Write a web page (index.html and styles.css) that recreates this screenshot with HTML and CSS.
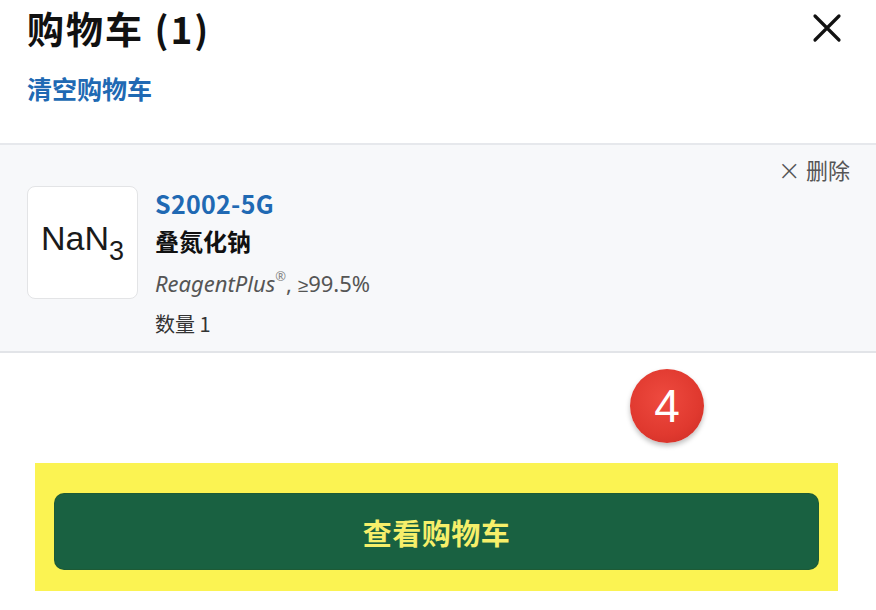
FILE: index.html
```html
<!DOCTYPE html>
<html lang="zh">
<head>
<meta charset="utf-8">
<link rel="stylesheet" href="styles.css">
</head>
<body>
<div class="panel">
  <header class="head">
    <div class="head-top">
      <h1 class="title">购物车 (1)</h1>
      <button class="close" aria-label="关闭">
        <svg width="30" height="30" viewBox="0 0 30 30"><path d="M3 3L27 27M27 3L3 27" stroke="#111" stroke-width="3.2" stroke-linecap="round"/></svg>
      </button>
    </div>
    <a class="clear" href="#">清空购物车</a>
  </header>
  <section class="item">
    <div class="item-del"><span class="del-x">×</span> 删除</div>
    <div class="item-body">
      <div class="thumb"><span>NaN<sub>3</sub></span></div>
      <div class="info">
        <a class="sku" href="#">S2002-5G</a>
        <div class="name">叠氮化钠</div>
        <div class="desc"><i>ReagentPlus</i><sup>®</sup>, <span class="ge">≥</span>99.5%</div>
        <div class="qty">数量 1</div>
      </div>
    </div>
  </section>
  <div class="spacer">
    <span class="badge">4</span>
  </div>
  <div class="highlight">
    <button class="view">查看购物车</button>
  </div>
</div>
</body>
</html>
```
FILE: styles.css
```css
* { box-sizing: border-box; }
html, body { margin: 0; padding: 0; background: #fff; }
body {
  width: 876px;
  height: 610px;
  overflow: hidden;
  font-family: "Noto Sans CJK SC", "Noto Sans", sans-serif;
  color: #1a1a1a;
}
.panel { display: flex; flex-direction: column; }
.head { padding: 5px 34px 0 27px; height: 143px; }
.head-top { display: flex; justify-content: space-between; align-items: center; }
.title {
  margin: 0;
  font-size: 37px;
  line-height: 46px;
  font-weight: 700;
  color: #111;
  letter-spacing: 2px;
}
.close {
  border: 0; background: none; padding: 0; margin-top: 0;
  width: 30px; height: 30px; display: flex;
}
.clear {
  display: inline-block;
  margin-top: 21px;
  font-size: 25px;
  line-height: 32px;
  font-weight: 700;
  color: #2069b3;
  text-decoration: none;
}
.item {
  background: #f7f8fa;
  border-top: 2px solid #e6e8ec;
  border-bottom: 2px solid #e2e4e8;
  height: 210px;
  padding: 9px 26px 0 27px;
  display: flex;
  flex-direction: column;
}
.item-del {
  align-self: flex-end;
  font-size: 22px;
  line-height: 30px;
  color: #555;
}
.del-x { font-size: 28px; font-family: "DejaVu Sans", sans-serif; font-weight: 300; vertical-align: -1px; }
.item-body { display: flex; gap: 17px; margin-top: 0; }
.thumb {
  width: 111px; height: 113px;
  background: #fff;
  border: 1px solid #e3e4e6;
  border-radius: 8px;
  display: flex; align-items: center; justify-content: center;
  font-family: "Liberation Sans", Arial, sans-serif;
  font-size: 34px;
  color: #1a1a1a;
  padding-bottom: 8px;
}
.thumb sub { font-size: 27px; vertical-align: -10px; line-height: 0; }
.info { display: flex; flex-direction: column; padding-top: 0; }
.sku {
  font-size: 25px; line-height: 34px; font-weight: 700;
  color: #2069b3; text-decoration: none; letter-spacing: 0.3px;
}
.name { font-size: 24px; line-height: 42px; font-weight: 700; color: #111; }
.desc { font-family: "Noto Sans", "Noto Sans CJK SC", sans-serif; font-size: 22px; line-height: 42px; color: #555; }
.desc sup { font-size: 13px; vertical-align: 11px; line-height: 0; color: #888; }
.ge { font-family: "Liberation Sans", sans-serif; font-size: 19px; }
.qty { font-size: 20px; line-height: 34px; color: #333; }
.spacer { position: relative; height: 110px; }
.badge {
  position: absolute;
  left: 630px; top: 16px;
  width: 74px; height: 74px;
  border-radius: 50%;
  background: radial-gradient(circle at 45% 40%, #ee4a3f 0%, #e0392f 60%, #c92b24 100%);
  box-shadow: 0 3px 5px rgba(0,0,0,0.25);
  color: #fff;
  font-family: "Liberation Sans", Arial, sans-serif;
  font-size: 46px;
  line-height: 74px;
  text-align: center;
}
.highlight {
  margin: 0 38px 0 35px;
  height: 128px;
  background: #fbf352;
  padding: 31px 20px 0 20px;
}
.view {
  width: 100%;
  height: 75px;
  border: 0;
  border-radius: 9px;
  background: #196141;
  color: #f6ef6a;
  font-family: "Noto Sans CJK SC", sans-serif;
  font-size: 29px;
  font-weight: 700;
  letter-spacing: 0.5px;
  box-shadow: 0 0 0 1px #1d5a35;
}
```
